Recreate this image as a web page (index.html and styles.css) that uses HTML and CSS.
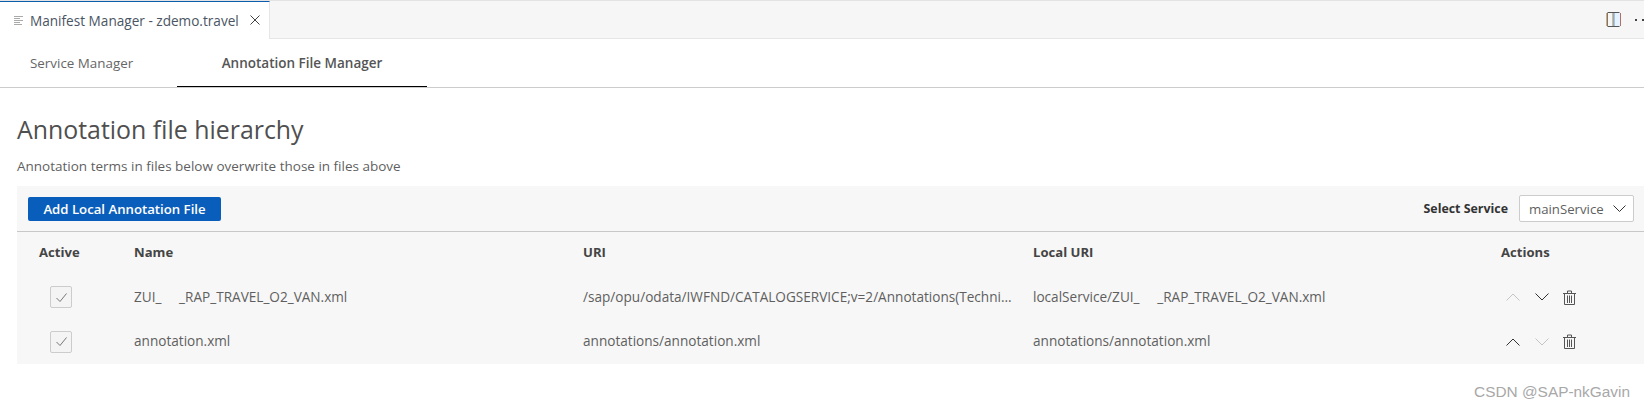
FILE: index.html
```html
<!DOCTYPE html>
<html lang="en">
<head>
    <meta charset="UTF-8">
    <meta name="viewport" content="width=device-width, initial-scale=1.0">
    <title>Manifest Manager - zdemo.travel</title>
    <link rel="stylesheet" href="styles.css">
</head>
<body>
    <div class="tab-strip">
        <div class="editor-tab">
            <svg class="tab-icon" width="10" height="9" viewBox="0 0 10 9"><path d="M0 .5h9M0 2.500h6M0 4.500h9M0 6.500h6M0 8.500h8" stroke="#aaa" fill="none"/></svg>
            <span class="editor-tab-label">Manifest Manager - zdemo.travel</span>
            <svg class="tab-close" width="10" height="10" viewBox="0 0 10 10"><path d="M.5.5l9 9M9.500.5l-9 9" stroke="#424242" fill="none"/></svg>
        </div>
        <div class="strip-actions">
            <svg width="15" height="15" viewBox="0 0 15 15"><rect x="8" y="1" width="6" height="13" fill="#e6f2ff"/><path d="M.5 1v13" stroke="#e0a860" fill="none"/><path d="M1.500 .5h12M1.500 14.500h12" stroke="#555" fill="none"/><path d="M1.500 1v13" stroke="#6a7d90" fill="none"/><path d="M7 1v13" stroke="#a5803f" fill="none"/><path d="M8 1v13" stroke="#5a9bd5" fill="none"/><path d="M14.500 1v13" stroke="#b0706a" fill="none"/></svg>
            <span class="more-dots"><i></i><i></i></span>
        </div>
    </div>

    <nav class="page-tabs">
        <a class="page-tab">Service Manager</a>
        <a class="page-tab active">Annotation File Manager</a>
    </nav>

    <main class="content">
        <h1>Annotation file hierarchy</h1>
        <p class="hint">Annotation terms in files below overwrite those in files above</p>

        <section class="panel">
            <div class="toolbar">
                <button type="button" class="add-btn">Add Local Annotation File</button>
                <label class="service-label">Select Service</label>
                <div class="service-select">
                    <span>mainService</span>
                    <svg width="13" height="7" viewBox="0 0 13 7"><path d="M.5.5l6 6 6-6" stroke="#333" fill="none"/></svg>
                </div>
            </div>

            <div class="grid-row head">
                <div class="col-active">Active</div>
                <div>Name</div>
                <div>URI</div>
                <div>Local URI</div>
                <div>Actions</div>
            </div>

            <div class="grid-row">
                <div class="col-active"><span class="check"><svg width="11" height="9" viewBox="0 0 11 9"><path d="M.5 5l3.500 3.500 6.500-8" stroke="#777" fill="none"/></svg></span></div>
                <div class="cell">ZUI_&nbsp;&nbsp;&nbsp;&nbsp;&nbsp;_RAP_TRAVEL_O2_VAN.xml</div>
                <div class="cell">/sap/opu/odata/IWFND/CATALOGSERVICE;v=2/Annotations(Techni...</div>
                <div class="cell">localService/ZUI_&nbsp;&nbsp;&nbsp;&nbsp;&nbsp;_RAP_TRAVEL_O2_VAN.xml</div>
                <div class="icons">
                    <svg class="off" width="14" height="8" viewBox="0 0 14 8"><path d="M.5 7.500L7 1l6.500 6.500"/></svg>
                    <svg width="14" height="8" viewBox="0 0 14 8"><path d="M.5.5L7 7 13.500.5"/></svg>
                    <svg class="trash" width="13" height="15" viewBox="0 0 13 15"><path d="M0 3.500h13M4.500 3V1h4v2M1.500 4v10.500h10V4M4.500 5.500v7.500M6.500 5.500v7.500M8.500 5.500v7.500"/></svg>
                </div>
            </div>

            <div class="grid-row">
                <div class="col-active"><span class="check"><svg width="11" height="9" viewBox="0 0 11 9"><path d="M.5 5l3.500 3.500 6.500-8" stroke="#777" fill="none"/></svg></span></div>
                <div class="cell">annotation.xml</div>
                <div class="cell">annotations/annotation.xml</div>
                <div class="cell">annotations/annotation.xml</div>
                <div class="icons">
                    <svg width="14" height="8" viewBox="0 0 14 8"><path d="M.5 7.500L7 1l6.500 6.500"/></svg>
                    <svg class="off" width="14" height="8" viewBox="0 0 14 8"><path d="M.5.5L7 7 13.500.5"/></svg>
                    <svg class="trash" width="13" height="15" viewBox="0 0 13 15"><path d="M0 3.500h13M4.500 3V1h4v2M1.500 4v10.500h10V4M4.500 5.500v7.500M6.500 5.500v7.500M8.500 5.500v7.500"/></svg>
                </div>
            </div>
        </section>
    </main>

    <div class="watermark">CSDN @SAP-nkGavin</div>
</body>
</html>
```

FILE: styles.css
```css
* {
    box-sizing: border-box;
}

body {
    font-family: "Open Sans", "Noto Sans", sans-serif;
    background-color: #fff;
    color: #5f5f5f;
    margin: 0;
    height: 410px;
    overflow: hidden;
    font-size: 13.6px;
}

.tab-strip {
    display: flex;
    height: 39px;
    background: #f6f6f6;
    border-top: 1px solid #e3e3e3;
    border-bottom: 1px solid #e6e6e6;
}

.editor-tab {
    display: flex;
    align-items: center;
    width: 270px;
    height: 38px;
    padding: 0 0 1px 14px;
    background: #fff;
    border-top: 1px solid #0b5cad;
    border-right: 1px solid #e6e6e6;
}

.tab-icon {
    margin-right: 6px;
}

.editor-tab-label {
    color: #4a5563;
    font-size: 13.6px;
    white-space: nowrap;
    width: 220px;
}

.strip-actions {
    margin-left: auto;
    display: flex;
    align-items: center;
}

.more-dots {
    display: flex;
    gap: 5px;
    width: 9px;
    margin-left: 14px;
}

.more-dots i {
    width: 2px;
    height: 2px;
    background: #444;
}

.page-tabs {
    display: flex;
    height: 49px;
    border-bottom: 1px solid #ccc;
    padding-left: 30px;
}

.page-tab {
    color: #666;
    font-size: 13.4px;
    line-height: 49px;
    height: 48px;
    width: 104px;
    white-space: nowrap;
}

.page-tab.active {
    width: 250px;
    margin-left: 43px;
    text-align: center;
    font-size: 13.5px;
    font-weight: 600;
    color: #555;
    border-bottom: 1px solid #000;
}

.content {
    padding: 0 0 0 17px;
}

h1 {
    font-size: 24.9px;
    font-weight: 400;
    color: #4f4f4f;
    margin: 23px 0 0;
    line-height: 36px;
}

.hint {
    margin: 10px 0 0;
    font-size: 13.5px;
    line-height: 18px;
}

.panel {
    margin-top: 11px;
    background: #f7f7f7;
    height: 178px;
}

.toolbar {
    display: flex;
    align-items: center;
    height: 46px;
    padding: 0 10px 0 11px;
    border-bottom: 1px solid #c8c8c8;
}

.add-btn {
    background-color: #0a5ebb;
    color: #fff;
    border: none;
    border-radius: 2px;
    width: 193px;
    height: 24px;
    padding: 0;
    font: 600 13.2px "Open Sans", "Noto Sans", sans-serif;
}

.service-label {
    margin-left: auto;
    font-weight: 700;
    font-size: 12.4px;
    margin-right: 11px;
    color: #333;
}

.service-select {
    display: flex;
    align-items: center;
    justify-content: space-between;
    width: 115px;
    height: 27px;
    padding: 0 7px 0 9px;
    background: #fff;
    border: 1px solid #ccc;
    border-radius: 2px;
    font-size: 13.2px;
}

.grid-row {
    display: grid;
    grid-template-columns: 117px 449px 450px 468px 1fr;
    align-items: center;
    height: 44.5px;
    white-space: nowrap;
}

.grid-row.head {
    height: 43px;
    padding-bottom: 4px;
    font-weight: 700;
    font-size: 13.1px;
    color: #444;
}

.cell {
    padding-bottom: 2px;
}

.col-active {
    padding-left: 22px;
}

.check {
    display: flex;
    align-items: center;
    justify-content: center;
    width: 22px;
    height: 22px;
    margin-left: 11px;
    background: #f4f4f4;
    border: 1px solid #ccc;
    border-radius: 2px;
}

.icons {
    display: flex;
    align-items: center;
    padding-left: 5px;
    gap: 15px;
}

.icons svg path {
    fill: none;
    stroke: #333;
}

.icons svg.off path {
    stroke: #c4c4c4;
}

.icons svg.trash {
    margin-left: -1px;
}

.icons svg.trash path {
    stroke: #555;
}

.watermark {
    position: absolute;
    right: 14px;
    bottom: 9px;
    font-family: "Liberation Sans", Arial, sans-serif;
    font-size: 15.4px;
    color: #a8a8a8;
}
```
